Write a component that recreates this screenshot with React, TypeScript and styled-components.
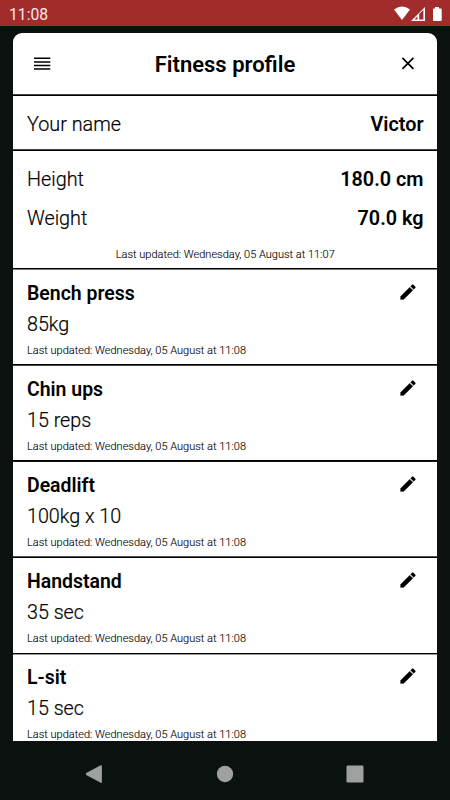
import React from "react";
import styled, { createGlobalStyle } from "styled-components";

const GlobalStyle = createGlobalStyle`
  * { box-sizing: border-box; }
  body { margin: 0; background: #0b110f; }
`;

const Screen = styled.div`
  width: 450px;
  height: 800px;
  display: flex;
  flex-direction: column;
  overflow: hidden;
  background: #0b110f;
  color: #000;
  font-family: Roboto, sans-serif;
`;

const StatusBar = styled.header`
  height: 26px;
  flex: none;
  display: flex;
  align-items: center;
  justify-content: space-between;
  padding: 2px 8px 0 9px;
  background: #a12c2b;
  color: #f7e9e9;
  font-size: 15.7px;
  line-height: 24px;
`;

const Clock = styled.span`
  padding-top: 1px;
`;

const StatusIcons = styled.svg`
  display: block;
  width: 50px;
  height: 16px;
`;

const Card = styled.main`
  height: 708px;
  flex: none;
  margin: 7px 13px 0;
  background: #fff;
  border-radius: 9px 9px 0 0;
  overflow: hidden;
`;

const Section = styled.section<{ $height: number; $top?: string; $bottom?: string }>`
  height: ${(p) => p.$height}px;
  display: flex;
  flex-direction: column;
  padding: 0 13.5px 0 14px;
  background: linear-gradient(
    ${(p) => p.$top ?? "#444"} 1px,
    ${(p) => p.$bottom ?? "#000"} 1px,
    ${(p) => p.$bottom ?? "#000"} 2px,
    #fff 2px
  );
`;

const TitleBar = styled.div`
  height: 61px;
  display: grid;
  grid-template-columns: 30px 1fr 30px;
  align-items: center;
  padding: 2px 14px 0;
`;

const Title = styled.h1`
  margin: 0;
  font-size: 22px;
  line-height: 26px;
  font-weight: 600;
  text-align: center;
`;

const IconButton = styled.button<{ $end?: boolean }>`
  display: flex;
  justify-content: ${(p) => (p.$end ? "flex-end" : "flex-start")};
  padding: 0;
  border: 0;
  background: none;
  color: #000;
`;

const Field = styled.div<{ $gap: number }>`
  display: flex;
  justify-content: space-between;
  margin-top: ${(p) => p.$gap}px;
  font-size: 19.8px;
  line-height: 24px;
`;

const Label = styled.span`
  font-weight: 300;
  -webkit-text-stroke: 0.2px #000;
`;

const Value = styled.span`
  font-weight: 600;
`;

const Updated = styled.div<{ $center?: boolean; $gap: number }>`
  margin-top: ${(p) => p.$gap}px;
  font-size: 11.03px;
  line-height: 14px;
  font-weight: 300;
  -webkit-text-stroke: 0.1px #000;
  text-align: ${(p) => (p.$center ? "center" : "left")};
`;

const ExerciseHead = styled.div<{ $inset: number }>`
  height: ${(p) => p.$inset + 25}px;
  display: flex;
  justify-content: space-between;
  align-items: flex-start;
  padding: ${(p) => p.$inset}px 6px 0 0;
`;

const ExerciseName = styled.h2`
  margin: 1px 0 0;
  font-size: 19.45px;
  line-height: 24px;
  font-weight: 600;
`;

const Result = styled.div`
  margin-top: 7px;
  font-size: 19.7px;
  line-height: 24px;
  font-weight: 300;
  -webkit-text-stroke: 0.2px #000;
`;

const EditButton = styled(IconButton)`
  margin-top: 1px;
`;

const NavBar = styled.nav`
  height: 59px;
  display: grid;
  grid-template-columns: repeat(3, 130px);
  justify-content: center;
  align-items: center;
  justify-items: center;
  padding: 7px 1px 0 0;
`;

const NavIcon = styled.svg`
  display: block;
  width: 18px;
  height: 18px;
  fill: #9fa1a0;
`;

const exercises = [
  { name: "Bench press", result: "85kg", height: 96, inset: 13, top: "#000", bottom: "#777" },
  { name: "Chin ups", result: "15 reps", height: 96, inset: 13, top: "#000", bottom: "#444" },
  { name: "Deadlift", result: "100kg x 10", height: 96, inset: 13, top: "#000", bottom: "#111" },
  { name: "Handstand", result: "35 sec", height: 97, inset: 13, top: "#555", bottom: "#000" },
  { name: "L-sit", result: "15 sec", height: 96, inset: 12, top: "#000", bottom: "#999" },
];

const Pencil = () => (
  <svg width="20" height="20" viewBox="0 0 24 24" aria-hidden="true">
    <path
      d="M3 17.25V21h3.75L17.81 9.94l-3.75-3.75L3 17.25zM20.71 7.04a1 1 0 0 0 0-1.41l-2.34-2.34a1 1 0 0 0-1.41 0l-1.83 1.83 3.75 3.75 1.83-1.83z"
      stroke="#000"
      strokeWidth=".3"
    />
  </svg>
);

export default function App() {
  return (
    <Screen>
      <GlobalStyle />
      <StatusBar>
        <Clock>11:08</Clock>
        <StatusIcons viewBox="392 5 50 16" fill="#fff" aria-hidden="true">
          <path d="M394 8.6Q402 2.6 410 8.6L402 19z" />
          <path fillRule="evenodd" d="M411 20L425 6V20zM419.2 12.9V18.6H423.4V9.1zM414.6 18.4H417.4V15.2z" />
          <path d="M435 6h4v1.5h2q.7 0 .7.7v11q0 .8-.8.8h-7.1q-.8 0-.8-.8v-11q0-.7.7-.7h1.3z" />
        </StatusIcons>
      </StatusBar>
      <Card>
        <TitleBar>
          <IconButton aria-label="Menu">
            <svg width="30" height="20" viewBox="27 54.7 30 20" aria-hidden="true">
              <path d="M34 58h16.3M34 61.6h16.3M34 65.2h16.3M34 68.8h16.3" stroke="#000" strokeWidth="1.5" />
            </svg>
          </IconButton>
          <Title>Fitness profile</Title>
          <IconButton $end aria-label="Close">
            <svg width="30" height="20" viewBox="393 55 30 20" aria-hidden="true">
              <path d="M402.4 57.8l11 11m0-11l-11 11" stroke="#000" strokeWidth="1.7" />
            </svg>
          </IconButton>
        </TitleBar>
        <Section $height={55}>
          <Field $gap={19}>
            <Label>Your name</Label>
            <Value>Victor</Value>
          </Field>
        </Section>
        <Section $height={119}>
          <Field $gap={19}>
            <Label>Height</Label>
            <Value>180.0 cm</Value>
          </Field>
          <Field $gap={15}>
            <Label>Weight</Label>
            <Value>70.0 kg</Value>
          </Field>
          <Updated $center $gap={17}>
            Last updated: Wednesday, 05 August at 11:07
          </Updated>
        </Section>
        {exercises.map((e) => (
          <Section key={e.name} $height={e.height} $top={e.top} $bottom={e.bottom}>
            <ExerciseHead $inset={e.inset}>
              <ExerciseName>{e.name}</ExerciseName>
              <EditButton aria-label={`Edit ${e.name}`}>
                <Pencil />
              </EditButton>
            </ExerciseHead>
            <Result>{e.result}</Result>
            <Updated $gap={7}>Last updated: Wednesday, 05 August at 11:08</Updated>
          </Section>
        ))}
      </Card>
      <NavBar>
        <NavIcon viewBox="1 0 18 18">
          <path d="M1.2 8L15.7.3q1.2-.5 1.2.8v15.8q0 1.3-1.2.8L1.2 10q-1-1 0-2z" />
        </NavIcon>
        <NavIcon viewBox="0 0 18 18">
          <circle cx="9" cy="9" r="8.2" />
        </NavIcon>
        <NavIcon viewBox="0 0 18 18">
          <rect x=".5" y=".5" width="17" height="17" rx="1.3" />
        </NavIcon>
      </NavBar>
    </Screen>
  );
}
